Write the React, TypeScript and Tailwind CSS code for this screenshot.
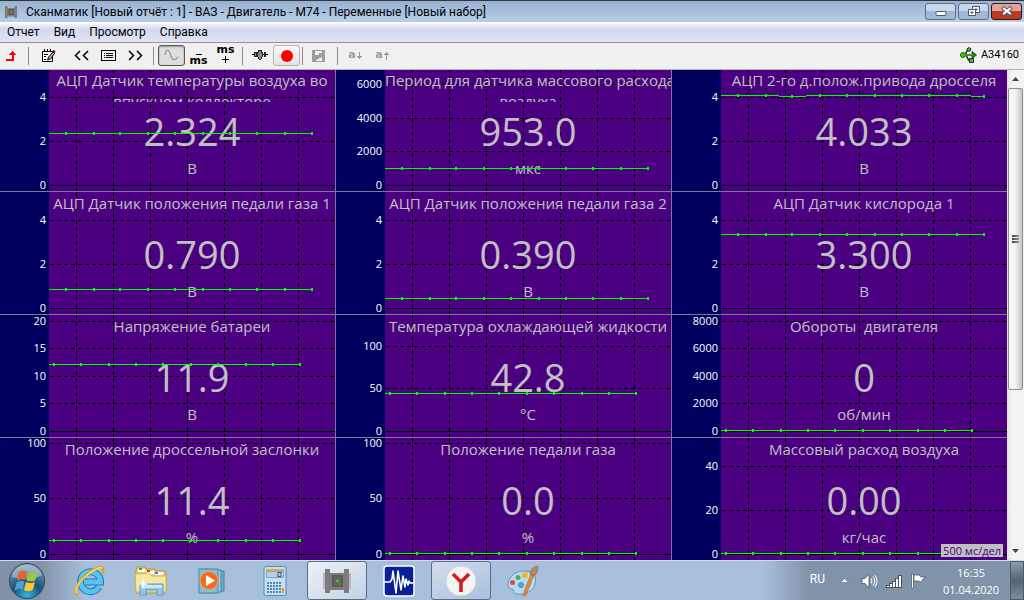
import type { ReactNode } from 'react';
import clsx from 'clsx';

interface Gauge {
  title: string;
  value: string;
  unit: string;
  ticks: number[];
  // pixels per unit on the vertical axis
  scale: number;
  samples: number[];
  late?: boolean;
}

const flat = (v: number) => Array<number>(10).fill(v);

const gauges: Gauge[] = [
  { title: 'АЦП Датчик температуры воздуха во\nвпускном коллекторе', value: '2.324', unit: 'В', ticks: [4, 2, 0], scale: 22, samples: flat(2.324), late: true },
  { title: 'Период для датчика массового расхода\nвоздуха', value: '953.0', unit: 'мкс', ticks: [6000, 4000, 2000, 0], scale: 0.01675, samples: flat(953), late: true },
  { title: 'АЦП 2-го д.полож.привода дросселя', value: '4.033', unit: 'В', ticks: [4, 2, 0], scale: 22, samples: [4.05, 4.05, 4, 4.05, 4.05, 4.05, 4.05, 4.05, 4.05, 4], late: true },
  { title: 'АЦП Датчик положения педали газа 1', value: '0.790', unit: 'В', ticks: [4, 2, 0], scale: 22, samples: flat(0.8), late: true },
  { title: 'АЦП Датчик положения педали газа 2', value: '0.390', unit: 'В', ticks: [4, 2, 0], scale: 22, samples: flat(0.39), late: true },
  { title: 'АЦП Датчик кислорода 1', value: '3.300', unit: 'В', ticks: [4, 2, 0], scale: 22, samples: flat(3.3), late: true },
  { title: 'Напряжение батареи', value: '11.9', unit: 'В', ticks: [20, 15, 10, 5, 0], scale: 5.5, samples: flat(12) },
  { title: 'Температура охлаждающей жидкости', value: '42.8', unit: '°C', ticks: [100, 50, 0], scale: 0.85, samples: flat(43) },
  { title: 'Обороты  двигателя', value: '0', unit: 'об/мин', ticks: [8000, 6000, 4000, 2000, 0], scale: 0.01375, samples: flat(0) },
  { title: 'Положение дроссельной заслонки', value: '11.4', unit: '%', ticks: [100, 50, 0], scale: 1.11, samples: flat(11.4) },
  { title: 'Положение педали газа', value: '0.0', unit: '%', ticks: [100, 50, 0], scale: 1.11, samples: flat(0) },
  { title: 'Массовый расход воздуха', value: '0.00', unit: 'кг/час', ticks: [40, 20, 0], scale: 2.2, samples: flat(0) },
];

const ZERO = 116;
const xsLate = [17, 45, 71, 99, 126, 154, 181, 208, 236, 263];
const xsEarly = [5, 32, 60, 87, 114, 142, 169, 197, 224, 251];
const divisions = [27, 64, 101, 138, 175, 212, 249];

export default function App() {
  return (
    <div className="flex min-h-screen flex-col bg-[#f0f0f0] font-['Open_Sans','Noto_Sans',sans-serif] text-xs text-black">
      <TitleBar />
      <MenuBar />
      <Toolbar />
      <main className="flex min-h-0 flex-1">
        <div className="relative grid min-w-0 flex-1 grid-cols-[336fr_336fr_335fr] grid-rows-[123fr_123fr_123fr_122fr]">
          {gauges.map((g) => (
            <GaugeCell key={g.title} gauge={g} />
          ))}
          <span className="absolute right-1 bottom-[3px] bg-[#c0c0c0] px-[2px] text-[11px] leading-[13px] text-[#4b0082]">
            500 мс/дел
          </span>
        </div>
        <ScrollBar />
      </main>
      <Taskbar />
    </div>
  );
}

function GaugeCell({ gauge }: { gauge: Gauge }) {
  const xs = gauge.late ? xsLate : xsEarly;
  const ys = gauge.samples.map((v) => ZERO - 1 - Math.round(v * gauge.scale));
  const tickY = (t: number) => ZERO - Math.round(t * gauge.scale);
  const points = xs.map((x, i) => `${x},${ys[i] + 0.5}`).join(' ');

  return (
    <section className="flex min-h-[122px] min-w-0 border-r border-b border-[#708090] bg-[#4b0082] nth-[3n]:border-r-0 nth-[n+10]:border-b-0">
      <div className="relative w-[49px] shrink-0 bg-[#00005e]">
        {gauge.ticks.map((t) => (
          <span
            key={t}
            className="absolute right-[3px] -translate-y-1/2 text-[11px] leading-[10px] text-white"
            style={{ top: tickY(t) }}
          >
            {t}
          </span>
        ))}
      </div>
      <div className="relative min-w-0 flex-1 overflow-hidden text-center text-[#c0c0c0]">
        <svg className="absolute inset-0 size-full" shapeRendering="crispEdges" stroke="#000" aria-hidden="true">
          {divisions.map((x) => (
            <line key={x} x1={x + 0.5} x2={x + 0.5} y1="0" y2="100%" strokeDasharray="4 3" />
          ))}
          {gauge.ticks.map((t) => (
            <line key={t} x1="1" x2="100%" y1={tickY(t) + 0.5} y2={tickY(t) + 0.5} strokeDasharray={t === 0 ? undefined : '4 3'} />
          ))}
        </svg>
        <div className="relative">
          <h2 className="h-[33px] overflow-hidden pt-px text-[15px] leading-[21px] whitespace-pre">{gauge.title}</h2>
          <p className="pt-[3px] text-[38px] leading-[52px]">{gauge.value}</p>
          <p className="text-[15px] leading-[22px]">{gauge.unit}</p>
        </div>
        <svg className="absolute inset-0 size-full" shapeRendering="crispEdges" aria-hidden="true">
          <polyline points={`0,${ys[0] + 0.5} ${points}`} fill="none" stroke="#0f0" />
          {xs.map((x, i) => (
            <rect key={x} x={x - 1} y={ys[i] - 1} width="2" height="3" fill="#0f0" />
          ))}
        </svg>
      </div>
    </section>
  );
}

function AdapterIcon({ className }: { className?: string }) {
  return (
    <svg className={className} viewBox="0 0 28 26" aria-hidden="true">
      <path d="M0 5h3v16H0zM25 5h3v16h-3z" fill="#c4b3c4" />
      <path d="M2 1h5v4h14V1h5v24h-5v-3H7v3H2z" fill="#7c7c7c" />
      <path d="M9 7h11v12H9z" fill="#5b5b5b" />
      <path d="M11 9h7v8h-7z" fill="#666" />
      <circle cx="14.500" cy="13" r="1.500" fill="#25e01c" />
    </svg>
  );
}

function TitleBar() {
  const frame = 'flex h-[17px] w-[31px] items-center justify-center rounded-[3px] border';
  const plain = 'border-[#5b6e86] bg-linear-to-b from-[#c5d7ea] from-50% to-[#9fb9d4] to-50%';
  return (
    <header className="flex h-[22px] items-center border-t border-[#353535] bg-linear-to-b from-[#96b1d0] to-[#b7cfe9] pr-[2px] pl-1">
      <AdapterIcon className="h-3.5 w-3.5" />
      <h1 className="ml-2 flex-1 truncate font-['Roboto',sans-serif] text-xs">
        Сканматик [Новый отчёт : 1] - ВАЗ - Двигатель - М74 - Переменные [Новый набор]
      </h1>
      <div className="flex gap-[2px] pb-px">
        <button aria-label="Свернуть" className={clsx(frame, plain)}>
          <svg width="12" height="13" aria-hidden="true">
            <rect x="1" y="6.500" width="10" height="4" rx="1" fill="#fff" stroke="#4e5564" />
          </svg>
        </button>
        <button aria-label="Восстановить" className={clsx(frame, plain)}>
          <svg width="14" height="12" fill="none" aria-hidden="true">
            <path d="M5.500 1.500h7v6h-7z" fill="#fff" stroke="#4e5564" />
            <path d="M8 4h2v1H8z" fill="#9fb9d4" stroke="#4e5564" />
            <path d="M1.500 4.500h7v6h-7z" fill="#fff" stroke="#4e5564" />
            <path d="M4 7h2v1H4z" fill="#9fb9d4" stroke="#4e5564" />
          </svg>
        </button>
        <button aria-label="Закрыть" className={clsx(frame, 'border-[#3f1017] bg-linear-to-b from-[#e2a196] from-45% to-[#b93a22] to-50%')}>
          <svg width="14" height="12" aria-hidden="true">
            <path d="M4 3.500l6 5M10 3.500l-6 5" stroke="#4e5564" strokeWidth="4" strokeLinecap="square" />
            <path d="M4 3.500l6 5M10 3.500l-6 5" stroke="#fff" strokeWidth="2" strokeLinecap="square" />
          </svg>
        </button>
      </div>
    </header>
  );
}

function MenuBar() {
  return (
    <nav className="flex h-[21px] items-center gap-[14px] border-b border-[#959595] bg-linear-to-b from-white via-[#d4daee] via-35% to-[#dfe5f6] px-[7px]">
      {['Отчет', 'Вид', 'Просмотр', 'Справка'].map((item) => (
        <button key={item} className="font-['Roboto',sans-serif]">
          {item}
        </button>
      ))}
    </nav>
  );
}

function Tool({ label, className, children }: { label: string; className?: string; children: ReactNode }) {
  return (
    <button aria-label={label} title={label} className={clsx('flex h-[21px] w-[27px] shrink-0 items-center justify-center', className)}>
      {children}
    </button>
  );
}

function Separator({ className = 'mx-1' }: { className?: string }) {
  return <span className={clsx('h-[18px] w-px shrink-0 bg-[#8c8c8c]', className)} />;
}

function Toolbar() {
  return (
    <div className="relative z-10 flex h-[26px] items-center bg-[#f0f0f0] pb-px shadow-[0_1px_0_#b4b4b4]">
      <button aria-label="Вверх" className="flex h-[21px] w-[22px] items-center justify-center">
        <svg width="12" height="12" shapeRendering="crispEdges" aria-hidden="true">
          <path d="M7 1h1v1h1v1h1v1h1v1H9v6H1V9h6V5H4V4h1V3h1V2h1z" fill="#f00" />
        </svg>
      </button>
      <Separator className="mx-[6px]" />
      <Tool label="Правка">
        <svg width="15" height="15" fill="none" stroke="#000" aria-hidden="true">
          <path d="M1.500 3.500h10v10h-10z" fill="#fff" />
          <path d="M3.500 1v3M6.500 1v3M9.500 1v3M3 6.500h4M3 8.500h2M3 11.500h2" />
          <path d="M12 4L7.500 9l-1 3 3-1 4-5.500z" fill="#aaa" />
          <path d="M12 2.500l2 2" stroke="#900" strokeWidth="2" />
        </svg>
      </Tool>
      <Tool label="Назад" className="ml-[6px]">
        <svg width="15" height="11" fill="none" stroke="#000" strokeWidth="1.500" aria-hidden="true">
          <path d="M6 1L1.500 5.500 6 10M14 1L9.500 5.500 14 10" />
        </svg>
      </Tool>
      <Tool label="Список">
        <svg width="15" height="12" fill="none" stroke="#000" shapeRendering="crispEdges" aria-hidden="true">
          <path d="M.5 .5h14v10H.5zM3 3.500h1M3 5.500h1M3 7.500h1M5 3.500h7M5 5.500h7M5 7.500h7" />
        </svg>
      </Tool>
      <Tool label="Вперёд">
        <svg width="15" height="11" fill="none" stroke="#000" strokeWidth="1.500" aria-hidden="true">
          <path d="M1 1l4.500 4.500L1 10M9 1l4.500 4.500L9 10" />
        </svg>
      </Tool>
      <Separator />
      <Tool label="График" className="rounded-[3px] border border-[#555] bg-[#dedede] shadow-[inset_0_1px_2px_#999]">
        <svg width="15" height="13" fill="none" stroke="#999" strokeWidth="1.300" aria-hidden="true">
          <path d="M1 6C2 0 5 0 6.500 5.500S11 13 14 7.500" />
        </svg>
      </Tool>
      <Tool label="Уменьшить развёртку" className="flex-col justify-end">
        <span className="h-px w-1.5 bg-black" />
        <span className="font-['DejaVu_Sans',sans-serif] text-[11px] leading-[11px] font-bold">ms</span>
      </Tool>
      <Tool label="Увеличить развёртку" className="flex-col justify-start">
        <span className="font-['DejaVu_Sans',sans-serif] text-[11px] leading-[9px] font-bold">ms</span>
        <svg width="7" height="7" stroke="#000" shapeRendering="crispEdges" className="mt-[2px]" aria-hidden="true">
          <path d="M0 3.500h7M3.500 0v7" />
        </svg>
      </Tool>
      <Separator className="mx-[3px]" />
      <Tool label="Маркер">
        <svg width="16" height="13" shapeRendering="crispEdges" aria-hidden="true">
          <path d="M0 5h16v1H0z" fill="#000" />
          <path d="M2 3h3v5H2zM12 3h2v5h-2zM5 3h6v5h-1v2H9v1H7v-1H6V8H5zM6 1h4v2H6z" fill="#222" />
          <path d="M3 4h1v3H3zM6 4h4v4H6zM7 2h2v8H7z" fill="#8a8a8a" />
        </svg>
      </Tool>
      <Tool label="Запись" className="rounded-[3px] border border-[#b5b5b5] bg-linear-to-b from-[#f8f8f8] to-[#e4e4e4]">
        <span className="size-3 rounded-full bg-[#f00]" />
      </Tool>
      <Separator className="mx-0.5" />
      <Tool label="Сохранить">
        <svg width="13" height="12" shapeRendering="crispEdges" aria-hidden="true">
          <path d="M0 0h13v12H0z" fill="#9c9c9c" />
          <path d="M3 1h7v2H7v2H3zM4 10h1V9h2V8h2V7h1v4H4z" fill="#f0f0f0" />
        </svg>
      </Tool>
      <Separator className="ml-[5px] mr-1" />
      <Tool label="Шрифт меньше">
        <SizeGlyph arrow="M3.500 0v7M1 4.500h5M2 5.500h3" />
      </Tool>
      <Tool label="Шрифт больше">
        <SizeGlyph arrow="M3.500 0v8M1 2.500h5M2 1.500h3" />
      </Tool>
      <div className="ml-auto flex items-center gap-1 pr-[5px]">
        <svg width="17" height="17" aria-hidden="true">
          <path d="M3 8h11M5 8l2.500-5H10M6 8l2.500 5H11" fill="none" stroke="#222" strokeWidth="1.500" />
          <path d="M12 4.500L16.500 8 12 11.500z" fill="#1f8a10" stroke="#222" strokeWidth=".8" />
          <circle cx="3" cy="8" r="2.500" fill="#35d010" stroke="#157000" />
          <circle cx="9" cy="2.500" r="1.800" fill="#35d010" stroke="#222" />
          <path d="M9.500 11.500h4v4h-4z" fill="#35d010" stroke="#222" />
          <path d="M5 8h8" stroke="#35d010" />
        </svg>
        <span className="font-['Roboto',sans-serif] text-[11px]">A34160</span>
      </div>
    </div>
  );
}

function SizeGlyph({ arrow }: { arrow: string }) {
  return (
    <span className="flex items-center text-[#9a9a9a]">
      <span className="pb-px font-['DejaVu_Sans',sans-serif] text-[11px] leading-3 font-bold">a</span>
      <svg width="7" height="8" fill="none" stroke="currentColor" shapeRendering="crispEdges" aria-hidden="true">
        <path d={arrow} />
      </svg>
    </span>
  );
}

function ScrollBar() {
  return (
    <div className="flex w-[17px] shrink-0 flex-col items-center bg-linear-to-r from-[#e3e3e3] to-[#f3f3f3] to-30%">
      <button aria-label="Прокрутить вверх" className="flex h-[19px] w-full items-center justify-center">
        <svg width="7" height="4" aria-hidden="true">
          <path d="M0 4l3.500-4L7 4z" fill="#444" />
        </svg>
      </button>
      <div className="flex w-full flex-1 flex-col">
        <div className="mx-auto flex h-2/3 w-[15px] flex-col items-center justify-center gap-px rounded-[2px] border border-[#8f8f8f] bg-linear-to-r from-[#f6f6f6] from-45% to-[#c6c6ca]">
          <span className="h-[2px] w-[7px] bg-linear-to-r from-[#444] to-[#999]" />
          <span className="h-[2px] w-[7px] bg-linear-to-r from-[#444] to-[#999]" />
          <span className="h-[2px] w-[7px] bg-linear-to-r from-[#444] to-[#999]" />
        </div>
      </div>
      <button aria-label="Прокрутить вниз" className="flex h-[19px] w-full items-center justify-center">
        <svg width="7" height="4" aria-hidden="true">
          <path d="M0 0l3.500 4L7 0z" fill="#444" />
        </svg>
      </button>
    </div>
  );
}

function StartIcon() {
  return (
    <svg width="38" height="38" viewBox="0 0 38 38" aria-hidden="true">
      <defs>
        <radialGradient id="orb" cx=".5" cy=".9" r=".9">
          <stop offset="0" stopColor="#35b4e2" />
          <stop offset=".45" stopColor="#18527f" />
          <stop offset="1" stopColor="#8ba3b5" />
        </radialGradient>
      </defs>
      <circle cx="19" cy="19" r="17.500" fill="url(#orb)" stroke="#2c4961" />
      <path d="M4 13a16 16 0 0 1 30 0c-8 5-20 5-30 2z" fill="#d3e0ea" opacity=".45" />
      <path d="M11 10c3-2 5-1 8 0l-2 8c-3-1-5-1-8 1z" fill="#e8642a" />
      <path d="M20.500 10.500c3 1.500 6 1.500 9-.5l-2 8c-3 2-6 2-9 .5z" fill="#9cc93c" />
      <path d="M8.500 20.500c3-2 5-2 8-1l-2 8c-3-1-5-1-8 1z" fill="#4f9fdc" />
      <path d="M18 20c3 1.500 6 1.500 9-.5l-2 8c-3 2-6 2-9 .5z" fill="#fbc92c" />
    </svg>
  );
}

function ExplorerEIcon() {
  return (
    <svg width="32" height="32" viewBox="0 0 32 32" fill="none" aria-hidden="true">
      <path d="M26 22a10 10 0 1 1 1.500-5H11" stroke="#1a78bf" strokeWidth="7" />
      <path d="M26 22a10 10 0 1 1 1.500-5H11" stroke="#59c2f0" strokeWidth="5" />
      <path d="M5 30c-5-1-2-10 6-18S28 0 30 3c1 2 0 4-1 6" stroke="#e0a516" strokeWidth="2.500" />
      <path d="M4 28c-3-3 1-10 8-16S27 1 29 3" stroke="#fbdc52" strokeWidth="1.500" />
    </svg>
  );
}

function FoldersIcon() {
  return (
    <svg width="34" height="32" viewBox="0 0 34 32" aria-hidden="true">
      <path d="M2 5l1-3h8l1 2h9l1 2h9l1 3v19H2z" fill="#e9cd78" stroke="#b9973e" />
      <path d="M4 4h7v3H4zM12 6h8v3h-8zM21 7h8v3h-8z" fill="#fff" />
      <path d="M5 3h3v2H5z" fill="#2aa83c" />
      <path d="M13 5h3v2h-3z" fill="#cc4030" />
      <path d="M21 7h3v2h-3z" fill="#2d7fdd" />
      <path d="M1 9l14-1 3 3h14v16H2z" fill="#f7e7a4" stroke="#cfb25d" />
      <path d="M6 30V19h23v11h-6v-5H12v5z" fill="#8dc8e6" stroke="#5d9cc4" />
      <path d="M7 20h21v3H7z" fill="#c9eaf7" />
      <path d="M9 13l1 5 5 1-5 1-1 5-1-5-5-1 5-1z" fill="#fff" />
    </svg>
  );
}

function MediaIcon() {
  return (
    <svg width="32" height="28" viewBox="0 0 32 28" aria-hidden="true">
      <path d="M10 3l17 1v20l-17 1z" fill="#6fa9c6" stroke="#4785a6" />
      <path d="M7 2l17 1v22L7 26z" fill="#9fcce0" stroke="#4785a6" />
      <path d="M2 2h19v24H2z" fill="#85bcd8" stroke="#4785a6" />
      <circle cx="12" cy="13.500" r="9" fill="#f26a1b" stroke="#f7a264" />
      <path d="M9 8l9 5.500L9 19z" fill="#fff" />
    </svg>
  );
}

function CalculatorIcon() {
  const keys = [5, 8, 11, 14, 17];
  return (
    <svg width="24" height="30" viewBox="0 0 24 30" aria-hidden="true">
      <rect x="1" y=".5" width="22" height="29" rx="1.500" fill="#c7e0f0" stroke="#4f8fb8" />
      <path d="M3 3h18v2H3z" fill="#f0a63a" />
      <path d="M3.500 5.500h17v6h-17z" fill="#b8cfe6" stroke="#7ba4c7" />
      <rect x="15" y="6.500" width="3" height="4" fill="none" stroke="#34598a" />
      {[16, 19, 22, 25].map((y) => keys.map((x) => <rect key={`${x}-${y}`} x={x - 1} y={y} width="2" height="2" fill="#5588b1" />))}
      <path d="M19 22h2v5h-2z" fill="#f09020" />
    </svg>
  );
}

function WaveIcon() {
  return (
    <svg width="32" height="32" viewBox="0 0 32 32" aria-hidden="true">
      <rect x="1" y="1" width="30" height="30" rx="3" fill="#08209a" stroke="#fff" strokeWidth="1.500" />
      <path d="M1 17h6l2-3 1-8 3 22 2-22 3 19 2-14 2 11 1-8 2 6 1-4 1 2h4" fill="none" stroke="#fff" strokeWidth="1.600" strokeLinejoin="round" />
    </svg>
  );
}

function BrowserIcon() {
  return (
    <svg width="32" height="32" viewBox="0 0 32 32" aria-hidden="true">
      <circle cx="16" cy="16" r="15" fill="#f4f4f4" stroke="#d0d3d8" />
      <path d="M8 9l8 8 8-8M16 16v11" fill="none" stroke="#d6191f" strokeWidth="3.500" />
    </svg>
  );
}

function PaintIcon() {
  return (
    <svg width="34" height="32" viewBox="0 0 34 32" aria-hidden="true">
      <path d="M2 20C2 11 11 5 20 6c8 1 11 6 9 13s-9 11-18 10c-5-1-2-5-5-5-2 0-4-1-4-4z" fill="#b4dcf2" stroke="#5898c0" />
      <circle cx="6.500" cy="17.500" r="2.500" fill="#e2493b" />
      <circle cx="12" cy="12.500" r="2.500" fill="#4bb04d" />
      <circle cx="19" cy="10" r="3" fill="#f2b430" />
      <circle cx="15" cy="20" r="2.500" fill="#6fa5c8" stroke="#4f88ae" />
      <path d="M25 9l3 1-8 20-3 1 1-4z" fill="#e58a34" stroke="#b0601c" strokeWidth=".6" />
      <path d="M24 9c0-4 3-7 8-8-1 4 0 7-4 10z" fill="#b38a66" stroke="#80603f" strokeWidth=".6" />
    </svg>
  );
}

const apps = [
  { name: 'Internet Explorer', icon: <ExplorerEIcon /> },
  { name: 'Проводник', icon: <FoldersIcon /> },
  { name: 'Проигрыватель', icon: <MediaIcon /> },
  { name: 'Калькулятор', icon: <CalculatorIcon /> },
  { name: 'Сканматик', icon: <AdapterIcon className="h-[26px] w-7" />, style: 'border-[#5c6d82] bg-linear-to-br from-[#eef2f7] to-[#c3d2e4]' },
  { name: 'Осциллограф', icon: <WaveIcon /> },
  { name: 'Браузер', icon: <BrowserIcon />, style: 'border-[#5c6d82] bg-linear-to-br from-[#d3deec] to-[#a9bfdd]' },
  { name: 'Paint', icon: <PaintIcon /> },
];

function Taskbar() {
  return (
    <footer className="flex h-10 items-stretch border-t border-[#d3dfeb] bg-[linear-gradient(90deg,#8292a6_0,#8292a6_40px,#a7bfdb_85px,#a7bfdb_calc(100%-260px),#8193a9_calc(100%-215px))] text-white">
      <button aria-label="Пуск" className="ml-2 flex w-[38px] items-center">
        <StartIcon />
      </button>
      <div className="ml-[13px] flex gap-[2px]">
        {apps.map((app) => (
          <button
            key={app.name}
            aria-label={app.name}
            className={clsx('flex w-[60px] items-center justify-center rounded-[3px] border', app.style ?? 'border-transparent')}
          >
            {app.icon}
          </button>
        ))}
      </div>
      <div className="ml-auto flex items-center">
        <span className="mr-[15px] pb-[3px] font-['Roboto',sans-serif]">RU</span>
        <div className="flex items-center gap-2">
          <svg width="9" height="5" className="mr-1" aria-hidden="true">
            <path d="M.5 4.500L4.500 .5l4 4z" fill="#fff" stroke="#4f5d6e" strokeWidth=".5" />
          </svg>
          <svg width="17" height="16" fill="none" aria-hidden="true">
            <path d="M1 5.500h3L8 1v14l-4-4.500H1z" fill="#fff" stroke="#46525f" strokeWidth=".8" />
            <path d="M10 5.500q2 2.500 0 5M12 3.500q3.500 4.500 0 9M14 2q4 6 0 12" stroke="#fff" />
          </svg>
          <svg width="16" height="14" fill="#fff" aria-hidden="true" shapeRendering="crispEdges">
            <path d="M0 11h3v3H0zM3 9h3v5H3zM6 7h3v7H6zM9 4h3v10H9zM12 1h4v13h-4z" fill="#46525f" />
            <path d="M1 12h2v1H1zM4 10h2v3H4zM7 8h2v5H7zM10 5h2v8h-2zM13 2h2v11h-2z" />
          </svg>
          <svg width="16" height="16" aria-hidden="true">
            <path d="M1.500 1h2v14h-2z" fill="#fff" stroke="#46525f" strokeWidth=".7" />
            <path d="M4 2h5l2 2h4.500L13 6l-2 3-3-1H4z" fill="#fff" stroke="#46525f" strokeWidth=".7" />
          </svg>
        </div>
        <time className="mr-[6px] ml-3 w-[66px] text-center text-[11px] leading-[17px]">
          16:35
          <br />
          01.04.2020
        </time>
      </div>
      <button aria-label="Свернуть все окна" className="w-[14px] border border-[#4b5968] bg-linear-to-b from-[#8b9cad] via-[#566474] to-[#7c8da0]" />
    </footer>
  );
}
